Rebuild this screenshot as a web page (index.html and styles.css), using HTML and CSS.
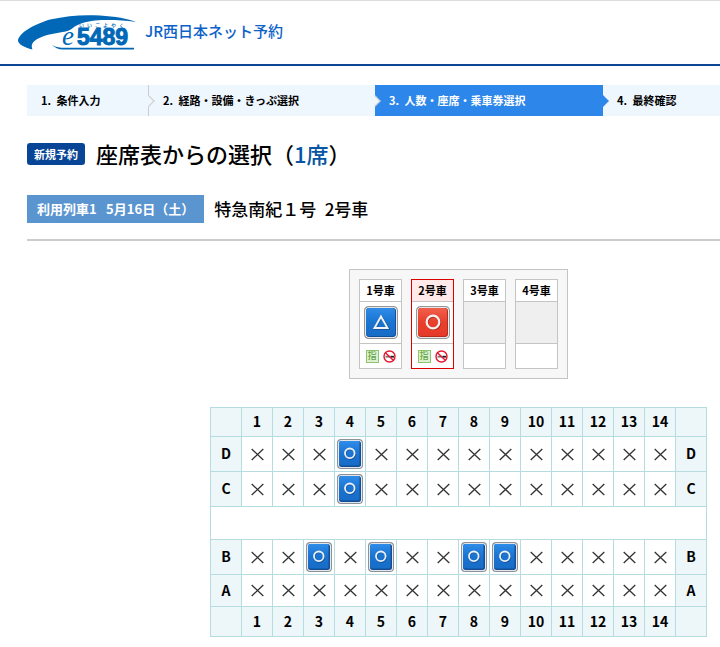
FILE: index.html
```html
<!DOCTYPE html>
<html lang="ja">
<head>
<meta charset="utf-8">
<meta name="viewport" content="width=device-width, initial-scale=1">
<title>JR西日本ネット予約</title>
<link rel="stylesheet" href="styles.css">
</head>
<body>
<svg class="sprite" aria-hidden="true">
  <defs>
    <linearGradient id="blue" x1="0" y1="0" x2="0" y2="1"><stop offset="0" stop-color="#2f8ce8"/><stop offset=".5" stop-color="#1a74d2"/><stop offset="1" stop-color="#176cc6"/></linearGradient>
    <linearGradient id="red" x1="0" y1="0" x2="0" y2="1"><stop offset="0" stop-color="#f0604c"/><stop offset=".5" stop-color="#e8402c"/><stop offset="1" stop-color="#e63a28"/></linearGradient>
    <symbol id="x" viewBox="0 0 13 13"><path d="M.7 1 12.3 12M12.3 1 .7 12" fill="none" stroke="#333" stroke-width="1.3"/></symbol>
    <symbol id="seat" viewBox="0 0 26 30">
      <rect x=".6" y=".6" width="24.800" height="28.800" rx="3.500" fill="#fff" stroke="#8b929c" stroke-width="1.200"/>
      <rect x="2" y="2" width="22" height="26" rx="2.500" fill="#124f96"/>
      <path d="M4 2h18.500L22.500 4v21L21.500 26.500H4a2 2 0 0 1-2-2V4a2 2 0 0 1 2-2Z" fill="url(#blue)"/>
      <circle cx="13.400" cy="15.200" r="4.800" fill="none" stroke="#0d4586" stroke-width="1.800" opacity=".6"/>
      <circle cx="12.800" cy="14.300" r="4.800" fill="none" stroke="#eef0f3" stroke-width="1.800"/>
    </symbol>
    <symbol id="few" viewBox="0 0 34 33">
      <rect x=".6" y=".6" width="32.800" height="31.800" rx="4" fill="#fff" stroke="#969696" stroke-width="1.200"/>
      <rect x="2" y="2" width="30" height="29" rx="3" fill="#115099"/>
      <rect x="2" y="2" width="29" height="28" rx="3" fill="url(#blue)"/>
      <path d="M17.800 11 25 23H11Z" fill="none" stroke="#0d4586" stroke-width="1.800" opacity=".6"/>
      <path d="M17 10.500 23.500 22H10.500Z" fill="none" stroke="#f2f2f2" stroke-width="1.900"/>
    </symbol>
    <symbol id="open" viewBox="0 0 34 33">
      <rect x=".6" y=".6" width="32.800" height="31.800" rx="4" fill="#fff" stroke="#969696" stroke-width="1.200"/>
      <rect x="2" y="2" width="30" height="29" rx="3" fill="#b72c1e"/>
      <rect x="2" y="2" width="29" height="28" rx="3" fill="url(#red)"/>
      <circle cx="17.800" cy="17" r="6.300" fill="none" stroke="#8f2014" stroke-width="2" opacity=".6"/>
      <circle cx="17" cy="16" r="6.300" fill="none" stroke="#f2f2f2" stroke-width="2.200"/>
    </symbol>
    <symbol id="nosmoke" viewBox="0 0 13 13">
      <path d="M2.500 5.800h6v1.800h-6Z" fill="#777"/><path d="M8 5.800h3v1.800H8Z" fill="#222"/>
      <circle cx="6.500" cy="6.500" r="5.500" fill="none" stroke="#e8132c" stroke-width="1.400"/>
      <path d="m2.700 2.900 7.600 7.300" stroke="#e8132c" stroke-width="1.400"/>
    </symbol>
  </defs>
</svg>

<header class="header">
  <a class="brand" href="#">
    <svg class="logo" viewBox="0 0 120 35" role="img" aria-label="e5489">
      <path d="M14.500 34.500C6 32.500 1 29.500 0 26 0 19 14 10 32 4.500 50 .5 65-.5 82 .5 97 1.500 110 3.500 118 7 104 5 89 4.500 77 5.500 66 7 62 8.500 56 12 52 15.500 49 16.500 42 17.500 31 19 21 22 16.500 26 13 29 13.500 32 14.500 34.500Z" fill="#0068b7"/>
      <path d="M34 30C38 32.500 42 32.700 47 32.700H116V34.500H45C40 34.500 37 32.500 34 30Z" fill="#0068b7"/>
      <text class="logo-e" x="44" y="30">e</text>
      <text class="logo-num" x="59" y="30">5489</text>
      <text class="logo-kana" x="61 69 77 85 93 101" y="12">いいごよやく</text>
    </svg>
    <span class="brand-name">JR西日本ネット予約</span>
  </a>
</header>

<main class="main">
  <ol class="steps">
    <li class="step step-first">1.&ensp;条件入力</li>
    <li class="step">2.&ensp;経路・設備・きっぷ選択</li>
    <li class="step step-current" aria-current="step">3.&ensp;人数・座席・乗車券選択</li>
    <li class="step step-last">4.&ensp;最終確認</li>
  </ol>

  <div class="title">
    <span class="tag">新規予約</span>
    <h1>座席表からの選択（<em>1席</em>）</h1>
  </div>

  <div class="train">
    <span class="train-date">利用列車1&ensp; 5月16日（土）</span>
    <h2>特急南紀１号&ensp;2号車</h2>
  </div>

  <div class="cars">
    <section class="car">
      <h3>1号車</h3>
      <div class="car-state"><button type="button" aria-label="1号車"><svg class="car-icon"><use href="#few"/></svg></button></div>
      <div class="car-info"><span class="reserved">指</span><svg class="nosmoke"><use href="#nosmoke"/></svg></div>
    </section>
    <section class="car car-selected">
      <h3>2号車</h3>
      <div class="car-state"><button type="button" aria-label="2号車"><svg class="car-icon"><use href="#open"/></svg></button></div>
      <div class="car-info"><span class="reserved">指</span><svg class="nosmoke"><use href="#nosmoke"/></svg></div>
    </section>
    <section class="car">
      <h3>3号車</h3>
      <div class="car-state car-none"></div>
      <div class="car-info"></div>
    </section>
    <section class="car">
      <h3>4号車</h3>
      <div class="car-state car-none"></div>
      <div class="car-info"></div>
    </section>
  </div>

  <table class="seats">
    <thead>
      <tr class="numbers"><th></th><th>1</th><th>2</th><th>3</th><th>4</th><th>5</th><th>6</th><th>7</th><th>8</th><th>9</th><th>10</th><th>11</th><th>12</th><th>13</th><th>14</th><th></th></tr>
    </thead>
    <tbody>
      <tr>
        <th>D</th>
        <td><svg class="x"><use href="#x"/></svg></td>
        <td><svg class="x"><use href="#x"/></svg></td>
        <td><svg class="x"><use href="#x"/></svg></td>
        <td><button type="button" aria-label="4D"><svg class="seat"><use href="#seat"/></svg></button></td>
        <td><svg class="x"><use href="#x"/></svg></td>
        <td><svg class="x"><use href="#x"/></svg></td>
        <td><svg class="x"><use href="#x"/></svg></td>
        <td><svg class="x"><use href="#x"/></svg></td>
        <td><svg class="x"><use href="#x"/></svg></td>
        <td><svg class="x"><use href="#x"/></svg></td>
        <td><svg class="x"><use href="#x"/></svg></td>
        <td><svg class="x"><use href="#x"/></svg></td>
        <td><svg class="x"><use href="#x"/></svg></td>
        <td><svg class="x"><use href="#x"/></svg></td>
        <th>D</th>
      </tr>
      <tr>
        <th>C</th>
        <td><svg class="x"><use href="#x"/></svg></td>
        <td><svg class="x"><use href="#x"/></svg></td>
        <td><svg class="x"><use href="#x"/></svg></td>
        <td><button type="button" aria-label="4C"><svg class="seat"><use href="#seat"/></svg></button></td>
        <td><svg class="x"><use href="#x"/></svg></td>
        <td><svg class="x"><use href="#x"/></svg></td>
        <td><svg class="x"><use href="#x"/></svg></td>
        <td><svg class="x"><use href="#x"/></svg></td>
        <td><svg class="x"><use href="#x"/></svg></td>
        <td><svg class="x"><use href="#x"/></svg></td>
        <td><svg class="x"><use href="#x"/></svg></td>
        <td><svg class="x"><use href="#x"/></svg></td>
        <td><svg class="x"><use href="#x"/></svg></td>
        <td><svg class="x"><use href="#x"/></svg></td>
        <th>C</th>
      </tr>
      <tr class="aisle"><td colspan="16"></td></tr>
      <tr>
        <th>B</th>
        <td><svg class="x"><use href="#x"/></svg></td>
        <td><svg class="x"><use href="#x"/></svg></td>
        <td><button type="button" aria-label="3B"><svg class="seat"><use href="#seat"/></svg></button></td>
        <td><svg class="x"><use href="#x"/></svg></td>
        <td><button type="button" aria-label="5B"><svg class="seat"><use href="#seat"/></svg></button></td>
        <td><svg class="x"><use href="#x"/></svg></td>
        <td><svg class="x"><use href="#x"/></svg></td>
        <td><button type="button" aria-label="8B"><svg class="seat"><use href="#seat"/></svg></button></td>
        <td><button type="button" aria-label="9B"><svg class="seat"><use href="#seat"/></svg></button></td>
        <td><svg class="x"><use href="#x"/></svg></td>
        <td><svg class="x"><use href="#x"/></svg></td>
        <td><svg class="x"><use href="#x"/></svg></td>
        <td><svg class="x"><use href="#x"/></svg></td>
        <td><svg class="x"><use href="#x"/></svg></td>
        <th>B</th>
      </tr>
      <tr class="window">
        <th>A</th>
        <td><svg class="x"><use href="#x"/></svg></td>
        <td><svg class="x"><use href="#x"/></svg></td>
        <td><svg class="x"><use href="#x"/></svg></td>
        <td><svg class="x"><use href="#x"/></svg></td>
        <td><svg class="x"><use href="#x"/></svg></td>
        <td><svg class="x"><use href="#x"/></svg></td>
        <td><svg class="x"><use href="#x"/></svg></td>
        <td><svg class="x"><use href="#x"/></svg></td>
        <td><svg class="x"><use href="#x"/></svg></td>
        <td><svg class="x"><use href="#x"/></svg></td>
        <td><svg class="x"><use href="#x"/></svg></td>
        <td><svg class="x"><use href="#x"/></svg></td>
        <td><svg class="x"><use href="#x"/></svg></td>
        <td><svg class="x"><use href="#x"/></svg></td>
        <th>A</th>
      </tr>
    </tbody>
    <tfoot>
      <tr class="numbers"><th></th><th>1</th><th>2</th><th>3</th><th>4</th><th>5</th><th>6</th><th>7</th><th>8</th><th>9</th><th>10</th><th>11</th><th>12</th><th>13</th><th>14</th><th></th></tr>
    </tfoot>
  </table>
</main>
</body>
</html>
```

FILE: styles.css
```css
* { box-sizing: border-box; }

body {
  margin: 0;
  overflow-x: hidden;
  background: #fff;
  color: #000;
  font-family: "Noto Sans CJK JP", sans-serif;
  font-weight: 500;
}

h1, h2, h3 { margin: 0; font-weight: 500; }
svg { display: block; }
button { display: block; margin: 0 auto; padding: 0; border: 0; background: none; cursor: pointer; }
.sprite { position: absolute; width: 0; height: 0; }

.header {
  padding: 14px 18px;
  border-top: 1px solid #ddd;
  border-bottom: 2px solid #0f4693;
}
.brand { display: flex; gap: 7px; align-items: center; color: #0c62c8; text-decoration: none; }
.logo { width: 120px; height: 35px; flex: none; }
.logo text { fill: #0068b7; }
.logo-e { font: italic 27px "Liberation Serif", serif; }
.logo-num { font: bold 23px "Liberation Sans", sans-serif; stroke: #0068b7; stroke-width: 1; }
.logo-kana { font: 500 5px "Noto Sans CJK JP", sans-serif; }
.brand-name { padding-bottom: 3px; font-size: 15px; line-height: 20px; }

.main { min-width: 890px; padding: 19px 0 10px 27px; }

.steps {
  display: grid;
  grid-template-columns: 122px 226px 228px 1fr;
  margin: 0;
  padding: 0;
  list-style: none;
  background: #eef6fe;
  font-size: 11px;
  font-weight: 700;
  line-height: 30px;
}
.step { position: relative; padding: 0 0 1px 14px; white-space: nowrap; }
.step-first { border-right: 1px solid #ccc; }
.step + .step::before {
  content: "";
  position: absolute;
  top: 12px;
  left: -4px;
  width: 7px;
  height: 7px;
  border: solid #ccc;
  border-width: 1px 1px 0 0;
  background: #eef6fe;
  transform: rotate(45deg);
}
.step-current { background: #2d86e9; color: #fff; }
.steps .step-last::before { border-color: #2d86e9; background: #2d86e9; }

.title { display: flex; gap: 11px; align-items: center; margin-top: 21px; }
.tag { padding: 0 7px; border-radius: 3px; background: #084596; color: #fff; font-size: 11px; font-weight: 700; line-height: 22px; }
h1 { padding-bottom: 2px; font-size: 22px; line-height: 32px; }
h1 em { color: #0755a5; font-style: normal; }

.train { display: flex; gap: 10px; align-items: center; margin-top: 24px; padding-bottom: 16px; border-bottom: 2px solid #ccc; }
.train-date { padding: 0 10px; background: #5b95cf; color: #fff; font-size: 13px; font-weight: 700; line-height: 28px; }
h2 { font-size: 17px; line-height: 28px; }

.cars {
  display: flex;
  gap: 9px;
  width: max-content;
  margin: 28px auto;
  padding: 9px;
  border: 1px solid #c4c4c4;
  background: #f7f7f7;
}
.car { width: 43px; border: 1px solid #c4c4c4; background: #fff; text-align: center; }
.car h3 { font-size: 11px; font-weight: 700; line-height: 21px; }
.car-state { height: 43px; padding-top: 4px; border: solid #c4c4c4; border-width: 1px 0; }
.car-none { background: #efefef; }
.car-icon { width: 34px; height: 33px; }
.car-info { display: flex; gap: 4px; align-items: center; justify-content: center; height: 24px; }
.reserved { width: 13px; height: 13px; border: 1px solid #8cc66e; background: #dff0d2; color: #62a644; font-size: 9px; line-height: 10px; }
.nosmoke { width: 13px; height: 13px; }
.car-selected { border-color: #dd0000; }
.car-selected h3 { background: #ffe9e9; }

.seats { width: 497px; margin: 0 auto; border-collapse: collapse; table-layout: fixed; }
.seats tr { height: 35px; }
.seats th, .seats td { padding: 0; border: 1px solid #b5dde0; }
.seats th { padding-bottom: 2px; background: #edf6f8; font-size: 14px; font-weight: 700; line-height: 20px; }
.seats .numbers { height: 30px; }
.seats thead .numbers { height: 29px; }
.seats .aisle { height: 33px; }
.seats .window { height: 32px; }
.x { width: 13px; height: 13px; margin: 0 auto; }
.seat { width: 26px; height: 30px; }
```
